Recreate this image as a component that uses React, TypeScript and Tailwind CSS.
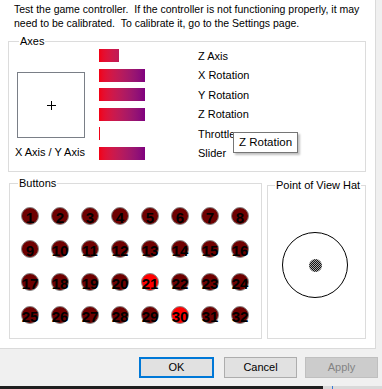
const axes = [
  { label: 'Z Axis', w: 20 },
  { label: 'X Rotation', w: 46 },
  { label: 'Y Rotation', w: 46 },
  { label: 'Z Rotation', w: 46 },
  { label: 'Throttle', w: 1 },
  { label: 'Slider', w: 46 },
];

const pressed = [21, 30];
const buttons = Array.from({ length: 32 }, (_, i) => i + 1);

function Bar({ w }: { w: number }) {
  return (
    <div className="h-[13px] overflow-hidden" style={{ width: w }}>
      <div className="h-full w-[46px] bg-gradient-to-r from-[#f20012] to-[#80007f]" />
    </div>
  );
}

export default function App() {
  return (
    <div className="relative w-[382px] h-[389px] overflow-hidden bg-[#f0f0f0] text-black font-['Liberation_Sans',Arial,sans-serif] flex flex-col">
      <div className="w-[376px] h-[349px] bg-white border-r border-b border-[#dadada] flex flex-col">
        <p className="pl-[14px] pt-[2px] text-[10.5px] leading-[14px]">
          Test the game controller.&nbsp; If the controller is not functioning properly, it may
          <br />
          need to be calibrated.&nbsp; To calibrate it, go to the Settings page.
        </p>

        {/* Axes */}
        <div className="relative ml-[8px] mt-[11px] w-[358px] h-[131px] border border-[#dcdcdc] flex">
          <span className="absolute left-[10px] -top-[7px] bg-white px-[1px] text-[11px] leading-[13px]">Axes</span>
          <div className="w-[90px] flex flex-col">
            <div className="ml-[8px] mt-[30px] w-[68px] h-[66px] border border-[#7a7f87] flex items-center justify-center">
              <svg width="9" height="9" viewBox="0 0 9 9">
                <path d="M4.5 0V9M0 4.5H9" stroke="#000" strokeWidth="1" />
              </svg>
            </div>
            <span className="ml-[6px] mt-[8px] text-[11px] leading-[13px] whitespace-nowrap">X Axis / Y Axis</span>
          </div>
          <div className="pt-[7px] flex flex-col gap-[6.5px]">
            {axes.map((a) => (
              <div key={a.label} className="h-[13px] flex items-center">
                <div className="w-[99px] h-[13px]">
                  <Bar w={a.w} />
                </div>
                <span className="text-[11px] leading-[13px] mt-[1px]">{a.label}</span>
              </div>
            ))}
          </div>
        </div>

        <div className="flex mt-[11px]">
          {/* Buttons */}
          <div className="relative ml-[9px] w-[253px] h-[156px] border border-[#dcdcdc]">
            <span className="absolute left-[8px] -top-[7px] bg-white px-[1px] text-[11px] leading-[13px]">Buttons</span>
            <div className="pl-[5px] pt-[15px] grid grid-cols-[repeat(8,30px)] grid-rows-[repeat(4,33px)]">
              {buttons.map((n) => (
                <div key={n} className="flex items-center justify-center">
                  <div
                    className={
                      'relative w-[18px] h-[18px] rounded-full border border-[#8a8a8a] ' +
                      (pressed.includes(n) ? 'bg-[#ff0000]' : 'bg-[#6e0000]')
                    }
                  >
                    <span className="absolute -inset-x-[4px] inset-y-0 flex items-center justify-center pt-[3px] text-[15px] leading-[15px] font-bold">
                      {n}
                    </span>
                  </div>
                </div>
              ))}
            </div>
          </div>

          {/* Point of View Hat */}
          <div className="relative ml-[5px] mt-[2px] w-[99px] h-[154px] border border-[#dcdcdc]">
            <span className="absolute left-[7px] -top-[7px] bg-white px-[1px] text-[11px] leading-[13px] whitespace-nowrap">
              Point of View Hat
            </span>
            <div className="ml-[14px] mt-[46px] w-[66px] h-[66px] rounded-full border border-black flex items-center justify-center">
              <div className="w-[13px] h-[13px] rounded-full bg-[repeating-conic-gradient(#111_0%_25%,#aaa_0%_50%)] bg-[length:2px_2px]" />
            </div>
          </div>
        </div>
      </div>

      <div className="flex mt-[8px] text-[11px]">
        <button className="ml-[139px] w-[75px] h-[21px] border-2 border-[#0078d7] bg-[#e1e1e1]">OK</button>
        <button className="ml-[10px] w-[73px] h-[21px] border border-[#adadad] bg-[#e1e1e1]">Cancel</button>
        <button className="ml-[8px] w-[73px] h-[21px] border border-[#bfbfbf] bg-[#cccccc] text-[#838383]">Apply</button>
      </div>

      <div className="mt-[8px] h-[3px] flex">
        <div className="w-[323px] bg-[#1f1f1f]" />
        <div className="w-[9px] bg-[#d9d9d9]" />
        <div className="w-[1px] bg-[#3a7bd5]" />
        <div className="flex-1 bg-[#d9d9d9]" />
      </div>

      <div className="absolute left-[233px] top-[132px] h-[21px] px-[5px] border border-[#767676] bg-white text-[11.5px] leading-[19px] shadow-[2px_2px_2px_rgba(0,0,0,0.25)]">
        Z Rotation
      </div>
    </div>
  );
}
